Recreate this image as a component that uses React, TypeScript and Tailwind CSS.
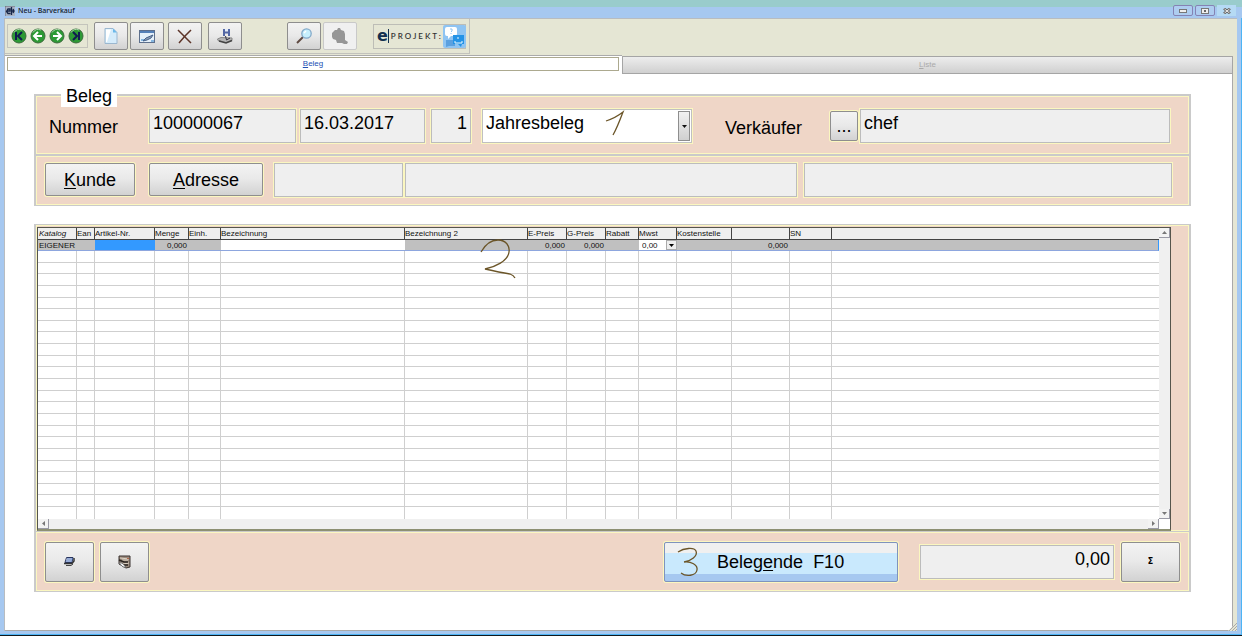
import React from "react";

const columns = [
  { name: "Katalog", width: "w-[39px]", value: "EIGENER" },
  { name: "Ean", width: "w-[18px]", value: "" },
  { name: "Artikel-Nr.", width: "w-[60px]", value: "" },
  { name: "Menge", width: "w-[34px]", value: "0,000" },
  { name: "Einh.", width: "w-[32px]", value: "" },
  { name: "Bezeichnung", width: "w-[184px]", value: "" },
  { name: "Bezeichnung 2", width: "w-[123px]", value: "" },
  { name: "E-Preis", width: "w-[39px]", value: "0,000" },
  { name: "G-Preis", width: "w-[39px]", value: "0,000" },
  { name: "Rabatt", width: "w-[33px]", value: "" },
  { name: "Mwst", width: "w-[38px]", value: "0,00" },
  { name: "Kostenstelle", width: "w-[55px]", value: "" },
  { name: "", width: "w-[58px]", value: "0,000" },
  { name: "SN", width: "w-[42px]", value: "" },
  { name: "", width: "", value: "" },
];

const emptyRows = Array.from({ length: 23 }, (_, i) => i);

const halo = "shadow-[0_0_0_1px_#fbf7c0]";
const raised =
  "border border-[#8e8e8e] rounded-[2px] bg-linear-to-b from-[#f3f3f3] from-0% via-[#e9e9e9] via-48% to-[#d2d2d2] to-100%";
const field =
  "h-[34px] min-w-0 rounded-none border border-[#bcbcbc] bg-[#efefef] px-[3px] pb-[5px] text-[18px] leading-6 text-black outline-1 outline-[#fbf7c0]";
const panel = "border-x-2 border-[#cacaca] bg-[#efd6c7] shadow-[inset_0_0_0_1px_#fbf7c0]";

const ToolButton = ({ label, className, children }: { label: string; className: string; children: React.ReactNode }) => (
  <button aria-label={label} className={`flex h-7 w-[34px] shrink-0 items-center justify-center ${className}`}>
    {children}
  </button>
);

const NavButton = ({ label, d }: { label: string; d: string }) => (
  <button aria-label={label} className="shrink-0">
    <svg width="16" height="16" viewBox="0 0 16 16" fill="none">
      <circle cx="8" cy="8" r="7" fill="#2c9a34" stroke="#3c6a3c" />
      <path d="M3 4.500A6.500 6.500 0 0 1 11 2" stroke="#a9d8a9" />
      <path d={d} stroke={label === "Erster" || label === "Letzter" ? "#101c50" : "#fff"} strokeWidth="2" />
    </svg>
  </button>
);

const ScrollArrow = ({ label, d }: { label: string; d: string }) => (
  <button aria-label={label} className="flex h-[10px] w-[11px] shrink-0 items-center justify-center border-r border-b border-[#9a9aa6] bg-[#f3f3f3]">
    <svg width="5" height="5" viewBox="0 0 5 5">
      <path d={d} fill="#777" />
    </svg>
  </button>
);

const TitleBar = () => (
  <header className="flex h-[18px] items-center bg-linear-to-b from-[#99cccc] from-[7px] to-[#a6c8f0] to-[7px] pt-[3px] pl-[5px] pr-[6px]">
    <svg width="10" height="10" viewBox="0 0 10 10" fill="none">
      <path d="M0 0H10V10H0Z" fill="#aab4c4" />
      <path d="M0 10V0H10" stroke="#667" />
      <path d="M5.500 7.500H3L1.500 5.500 3 3H5V5H2M6.500 1V9M8 3L9 5 8 7M6 5H9" stroke="#16264a" strokeWidth="1.300" />
    </svg>
    <h1 className="ml-[3px] font-['Noto_Sans',sans-serif] text-[7px] font-medium leading-[10px] text-[#101828]">Neu - Barverkauf</h1>
    <div className="ml-auto flex items-center gap-[2px] self-start pt-[2px]">
      <button aria-label="Minimieren" className="flex h-[11px] w-5 items-center justify-center rounded-[2px] border border-[#8583b4] bg-[#aecdf0]">
        <svg width="8" height="4" viewBox="0 0 8 4">
          <rect x="0.500" y="0.500" width="7" height="3" fill="#eee" stroke="#777" />
        </svg>
      </button>
      <button aria-label="Maximieren" className="flex h-[11px] w-5 items-center justify-center rounded-[2px] border border-[#8583b4] bg-[#aecdf0]">
        <svg width="8" height="6" viewBox="0 0 8 6">
          <rect x="0.500" y="0.500" width="7" height="5" fill="#eee" stroke="#777" />
          <rect x="3" y="2" width="2" height="2" fill="#666" />
        </svg>
      </button>
      <button aria-label="Schließen" className="flex h-[11px] w-[19px] items-center justify-center bg-[#b5daf4]">
        <svg width="8" height="6" viewBox="0 0 8 6" fill="none">
          <path d="M1 0.500L7 5.500M7 0.500L1 5.500" stroke="#666" strokeWidth="2.600" />
          <path d="M1.500 1L6.500 5M6.500 1L1.500 5" stroke="#eee" />
        </svg>
      </button>
    </div>
  </header>
);

const Toolbar = () => (
  <div className="flex h-[35px] w-[465px] items-center border-r border-b border-[#c2c2bc] pl-[2px]">
    <div className="flex h-6 w-[81px] items-center justify-center gap-[3px] border border-[#c4c4bc]">
      <NavButton label="Erster" d="M5 4V12M11 4L7 8L11 12" />
      <NavButton label="Zurück" d="M8 4L4 8L8 12M4 8H12" />
      <NavButton label="Weiter" d="M8 4L12 8L8 12M12 8H4" />
      <NavButton label="Letzter" d="M11 4V12M5 4L9 8L5 12" />
    </div>
    <ToolButton label="Neu" className={`ml-[6px] ${raised}`}>
      <svg width="14" height="16" viewBox="0 0 14 16" fill="none">
        <path d="M1 0.500H9L13 4.500V15.500H1Z" fill="#d5ecfb" stroke="#9bb7cf" />
        <path d="M2 1.500H7L3 14H2Z" fill="#fff" />
        <path d="M9 0.500V4.500H13Z" fill="#6cb9ea" />
      </svg>
    </ToolButton>
    <ToolButton label="Bearbeiten" className={`ml-[2px] ${raised}`}>
      <svg width="16" height="13" viewBox="0 0 16 13" fill="none">
        <rect x="0.500" y="0.500" width="15" height="12" fill="#e5f0fa" stroke="#5d6f8c" />
        <path d="M1 2H15" stroke="#5580b8" strokeWidth="2" />
        <path d="M2 10H6M12 11H15" stroke="#86b6e0" strokeWidth="2" />
        <path d="M4 11L7 8L14 5L12 8L8 10Z" fill="#8e9db4" stroke="#46628a" />
      </svg>
    </ToolButton>
    <ToolButton label="Löschen" className={`ml-[4px] ${raised}`}>
      <svg width="16" height="15" viewBox="0 0 16 15" fill="none">
        <path d="M1 1L14 14" stroke="#5d3428" strokeWidth="1.500" />
        <path d="M14 1L8 7L2 14" stroke="#5d3428" strokeWidth="1.500" />
      </svg>
    </ToolButton>
    <ToolButton label="Speichern" className={`ml-[6px] ${raised}`}>
      <svg width="16" height="16" viewBox="0 0 16 16" fill="none">
        <path d="M0.500 11L4 9.500L15 10V12.500L9 14.500L1 12.500Z" fill="#b5b5b5" stroke="#888" />
        <path d="M2 13L9 15L15 12.500" stroke="#444" strokeWidth="1.500" />
        <path d="M7 1V8M12 1V8M7 4.500H12" stroke="#5367a5" strokeWidth="2" />
        <path d="M8 1H11V3H8Z" fill="#e4eefa" />
        <path d="M8.500 8L9.500 12L13 10" stroke="#334" />
      </svg>
    </ToolButton>
    <ToolButton label="Suchen" className={`ml-[45px] ${raised}`}>
      <svg width="16" height="16" viewBox="0 0 16 16" fill="none">
        <path d="M1 15L7 9" stroke="#5f4a42" strokeWidth="2" />
        <circle cx="10.500" cy="5.500" r="4.700" fill="#c7effc" stroke="#83a9c9" strokeWidth="1.300" />
        <path d="M8 5L10 3" stroke="#fff" strokeWidth="1.500" />
      </svg>
    </ToolButton>
    <ToolButton label="Apfel" className="ml-[2px] rounded-[2px] border border-[#c9c9c9] bg-[#f0f0f0]">
      <svg width="18" height="16" viewBox="0 0 18 16">
        <path d="M1 5L4 2H6L7 0L9 0L10 2L13 3L14 6V12L17 14L16 16H13L11 15L6 15L5 12L2 11L1 9Z" fill="#969696" />
      </svg>
    </ToolButton>
    <div className="ml-[16px] flex h-[25px] w-[93px] shrink-0 items-center border border-[#bdbdb6] pl-[3px]">
      <span className="font-['DejaVu_Sans'] text-[16px] font-bold leading-4 text-[#14304f]">e</span>
      <span className="h-[14px] w-px shrink-0 bg-[#14304f]" />
      <span className="ml-[2px] font-['Lato',sans-serif] text-[8px] font-semibold tracking-[2px] leading-3 text-[#333]">PROJEKT:</span>
      <svg className="ml-auto shrink-0" width="23" height="23" viewBox="0 0 23 23" fill="none">
        <rect width="23" height="23" rx="2" fill="#8fc4f2" />
        <path d="M2 4Q2 2 4 2H12Q14 2 14 4V9Q14 11 12 11H8L5 14V11H4Q2 11 2 9Z" fill="#fff" />
        <path d="M3 15H12V21H6L3 22Z" fill="#5ba0df" />
        <path d="M10 10H21V19H19L18 22L15 19H10Z" fill="#2493e6" />
        <path d="M12 16V18H19V16M15 12V14" stroke="#e8f7ff" />
        <path d="M7 4H9V6L8 7M8 8V9" stroke="#8fc4f2" />
      </svg>
    </div>
  </div>
);

const Tabs = () => (
  <nav className="grid h-[20px] grid-cols-[101fr_100fr] text-[8px] leading-[10px]">
    <div className="mt-px border-t border-[#aaa] bg-white pt-px pr-[3px] pb-[3px] pl-[2px]">
      <button className="block h-[14px] w-full border border-[#aca98f] bg-white text-[#2450b4]">
        <u>B</u>eleg
      </button>
    </div>
    <button className="mt-[2px] border border-[#a5a5a5] bg-linear-to-b from-[#ededed] to-[#d0d0d0] text-[#aaa]">
      <u>L</u>iste
    </button>
  </nav>
);

const BelegForm = () => (
  <section className="relative">
    <h2 className="absolute -top-[6px] left-[27px] h-[19px] bg-white px-[5px] text-[18px] leading-[17px]">Beleg</h2>
    <div className={`flex h-[61px] items-start border-t-2 border-b pt-[13px] pr-[19px] pl-[13px] ${panel}`}>
      <label htmlFor="nummer" className="w-[100px] shrink-0 text-[18px] leading-9">Nummer</label>
      <input id="nummer" readOnly defaultValue="100000067" className={`w-[147px] ${field}`} />
      <input aria-label="Datum" readOnly defaultValue="16.03.2017" className={`ml-[4px] w-[125px] ${field}`} />
      <input aria-label="Kasse" readOnly defaultValue="1" className={`ml-[6px] w-10 text-right ${field}`} />
      <div className={`relative ml-[11px] flex h-[34px] w-[210px] shrink-0 border border-[#c0c0c0] bg-white ${halo}`}>
        <select aria-label="Belegart" className="w-full appearance-none bg-white pb-[7px] pl-[3px] text-[18px] leading-6">
          <option>Jahresbeleg</option>
        </select>
        <span className="pointer-events-none absolute top-px right-px flex h-[30px] w-3 items-center justify-center border border-[#8e8e8e] bg-linear-to-b from-[#f1f1f1] to-[#d0d0d0]">
          <svg width="5" height="3" viewBox="0 0 5 3">
            <path d="M0 0H5L2.500 3Z" fill="#111" />
          </svg>
        </span>
        <svg className="pointer-events-none absolute top-0 left-[122px]" width="20" height="28" viewBox="0 0 20 28" fill="none">
          <path d="M1 11C7 9 13 6 18 2C15 10 12 18 8 25" stroke="#6b5528" strokeWidth="1.300" />
        </svg>
      </div>
      <label htmlFor="verkaeufer" className="ml-[33px] w-[105px] shrink-0 text-[18px] leading-[38px]">Verkäufer</label>
      <button aria-label="Verkäufer wählen" className={`mt-[2px] h-[30px] w-7 shrink-0 text-[18px] leading-7 ${raised} ${halo}`}>...</button>
      <input id="verkaeufer" readOnly defaultValue="chef" className={`ml-[2px] flex-1 ${field}`} />
    </div>
    <div className={`flex h-[51px] items-start border-t border-b pt-[7px] pr-[17px] pl-[9px] ${panel}`}>
      <button className={`h-[33px] w-[90px] shrink-0 text-[18px] leading-6 ${raised} ${halo}`}>
        <u className="decoration-1 underline-offset-2">K</u>unde
      </button>
      <button className={`ml-[14px] h-[33px] w-[114px] shrink-0 text-[18px] leading-6 ${raised} ${halo}`}>
        <u className="decoration-1 underline-offset-2">A</u>dresse
      </button>
      <input aria-label="Kundennummer" readOnly className={`ml-[11px] w-[129px] ${field}`} />
      <input aria-label="Kundenname" readOnly className={`ml-[2px] w-[392px] ${field}`} />
      <input aria-label="Kundenadresse" readOnly className={`ml-[7px] flex-1 ${field}`} />
    </div>
  </section>
);

const cellTone = (i: number) => {
  if (i === 2) return "bg-[#3399ff]";
  if (i === 5 || i === 10) return "bg-white";
  return "bg-[#c0c0c0]";
};

const Positionen = () => (
  <div className={`h-[307px] border-t pt-[2px] pr-[18px] pl-px ${panel}`}>
    <div className="relative grid grid-cols-[1fr_11px] border border-[#55554c] border-b-2 border-b-[#8d9073] bg-white">
      <table className="h-[291px] w-full table-fixed border-separate border-spacing-0 text-[8px] leading-[9px] text-[#111]">
        <thead>
          <tr className="h-3">
            {columns.map((c, i) => (
              <th
                key={i}
                className={`h-3 overflow-hidden border-b border-[#444] bg-[#efefef] p-0 text-left font-normal whitespace-nowrap ${c.width} ${i < 14 ? "border-r" : ""} ${i === 0 ? "pl-px italic" : ""}`}
              >
                {c.name}
              </th>
            ))}
          </tr>
        </thead>
        <tbody>
          <tr className="h-[11px]">
            {columns.map((c, i) => (
              <td
                key={i}
                className={`h-[11px] overflow-hidden border-b border-[#8da6de] p-0 whitespace-nowrap ${cellTone(i)} ${i === 0 ? "pl-px" : ""} ${i > 0 && i !== 10 ? "pr-[2px] text-right" : ""} ${i === 14 ? "border-r border-r-[#3399ff]" : ""}`}
              >
                {i === 10 ? (
                  <span className="relative block h-[10px]">
                    <select aria-label="Mwst" className="block h-[10px] w-full appearance-none pl-[3px] text-[8px] leading-[9px]">
                      <option>{c.value}</option>
                    </select>
                    <span className="pointer-events-none absolute top-0 right-0 flex h-[10px] w-[11px] items-center justify-center border border-[#aaa] bg-[#eee]">
                      <svg width="5" height="3" viewBox="0 0 5 3">
                        <path d="M0 0H5L2.500 3Z" fill="#000" />
                      </svg>
                    </span>
                  </span>
                ) : (
                  c.value
                )}
              </td>
            ))}
          </tr>
          {emptyRows.map((r) => (
            <tr key={r}>
              {columns.map((_, i) => (
                <td
                  key={i}
                  className={`border-[#cfcfcf] p-0 ${i < 14 ? "border-r" : ""} ${r < 22 ? "border-b pt-[10px]" : "pt-[11px]"}`}
                />
              ))}
            </tr>
          ))}
        </tbody>
      </table>
      <div className="flex flex-col justify-between bg-[#f0f0f0]">
        <ScrollArrow label="Nach oben" d="M0 4L2.500 1L5 4Z" />
        <ScrollArrow label="Nach unten" d="M0 1L2.500 4L5 1Z" />
      </div>
      <div className="flex justify-between bg-[#f0f0f0]">
        <ScrollArrow label="Nach links" d="M4 0L1 2.500L4 5Z" />
        <ScrollArrow label="Nach rechts" d="M1 0L4 2.500L1 5Z" />
      </div>
      <svg className="pointer-events-none absolute top-[10px] left-[441px]" width="40" height="42" viewBox="0 0 40 42" fill="none">
        <path d="M2 14C6 7 12 2 19 2C27 2 31 8 30 14C29 23 16 29 6 31C15 33 25 35 31 36C34 37 35 38 36 40" stroke="#6b5528" strokeWidth="1.300" />
      </svg>
    </div>
  </div>
);

const Footer = () => (
  <div className={`flex h-[61px] items-center border-t border-b pr-[9px] pl-[9px] ${panel}`}>
    <button aria-label="Drucken" className={`flex h-10 w-[49px] shrink-0 items-center justify-center ${raised} ${halo}`}>
      <svg width="11" height="11" viewBox="0 0 11 11" fill="none">
        <path d="M2.500 1.500H9L8 6.500H1Z" fill="#eef3ff" stroke="#28345e" />
        <path d="M3 3H9M2 5H8" stroke="#3d62ac" />
        <path d="M0 7.500H8L10 5V2" stroke="#333" strokeWidth="1.500" />
        <path d="M2 9.500H7L9 8" stroke="#444" />
      </svg>
    </button>
    <button aria-label="Kasse öffnen" className={`ml-[6px] flex h-10 w-[49px] shrink-0 items-center justify-center ${raised} ${halo}`}>
      <svg width="13" height="14" viewBox="0 0 13 14" fill="none">
        <path d="M1 1H12V12L8 13L1 9Z" fill="#9a8a7c" stroke="#3a3330" />
        <path d="M2 3L11 4M4 5L10 5M5 9L11 8" stroke="#ddd3c4" />
        <path d="M1 5L6 7H10M5 10L10 10" stroke="#28231f" strokeWidth="1.500" />
        <path d="M1 8L5 12H8L4 8Z" fill="#eee" stroke="#777" />
        <path d="M9 3H11V4H9Z" fill="#b1664a" />
      </svg>
    </button>
    <button
      className={`ml-auto flex h-10 w-[234px] shrink-0 items-center rounded-[2px] border border-[#7f93bd] bg-[linear-gradient(#f0f0f0_10px,#c9e9fd_10px,#c9e9fd_31px,#a6c8f0_31px)] pl-[11px] text-[18px] leading-6 ${halo}`}
    >
      <svg width="25" height="32" viewBox="0 0 25 32" fill="none">
        <path d="M2 6C8 2 18 1 20 5C22 10 15 15 8 16C15 15 22 19 21 24C20 30 10 31 5 27" stroke="#6b5528" strokeWidth="1.300" />
      </svg>
      <span className="ml-[16px] whitespace-pre">
        Beleg<u className="decoration-1 underline-offset-2">e</u>nde{"  "}F10
      </span>
    </button>
    <input aria-label="Summe" readOnly defaultValue="0,00" className={`ml-[22px] w-[194px] text-right ${field}`} />
    <button aria-label="Summe berechnen" className={`ml-[7px] h-10 w-[59px] shrink-0 font-['DejaVu_Sans'] text-[8px] font-bold ${raised} ${halo}`}>Σ</button>
  </div>
);

const App = () => {
  return (
    <div className="flex min-h-screen flex-col border-b border-[#10181c] bg-[#a6c8f0] font-['Liberation_Sans',Arial,sans-serif] text-black">
      <TitleBar />
      <div className="flex flex-1 flex-col border-r border-b border-[#4db4f5] pr-[4px] pb-[3px] pl-[4px]">
        <div className="relative flex flex-1 flex-col border-t border-l border-[#b8bcc0] bg-[#e5e6d4] pr-[4px]">
          <Toolbar />
          <Tabs />
          <main className="flex flex-1 flex-col border-r border-b border-[#a9a9a9] bg-white pt-[20px] pr-[41px] pl-[29px]">
            <BelegForm />
            <div className="mt-[18px]">
              <Positionen />
              <Footer />
            </div>
          </main>
          <svg className="absolute right-0 bottom-0" width="9" height="9" viewBox="0 0 9 9">
            <path d="M0 9L9 0V9Z" fill="#e5e6d4" />
            <path d="M1 9L9 1M4 9L9 4M7 9L9 7" stroke="#aaa" />
          </svg>
        </div>
      </div>
    </div>
  );
};

export default App;
